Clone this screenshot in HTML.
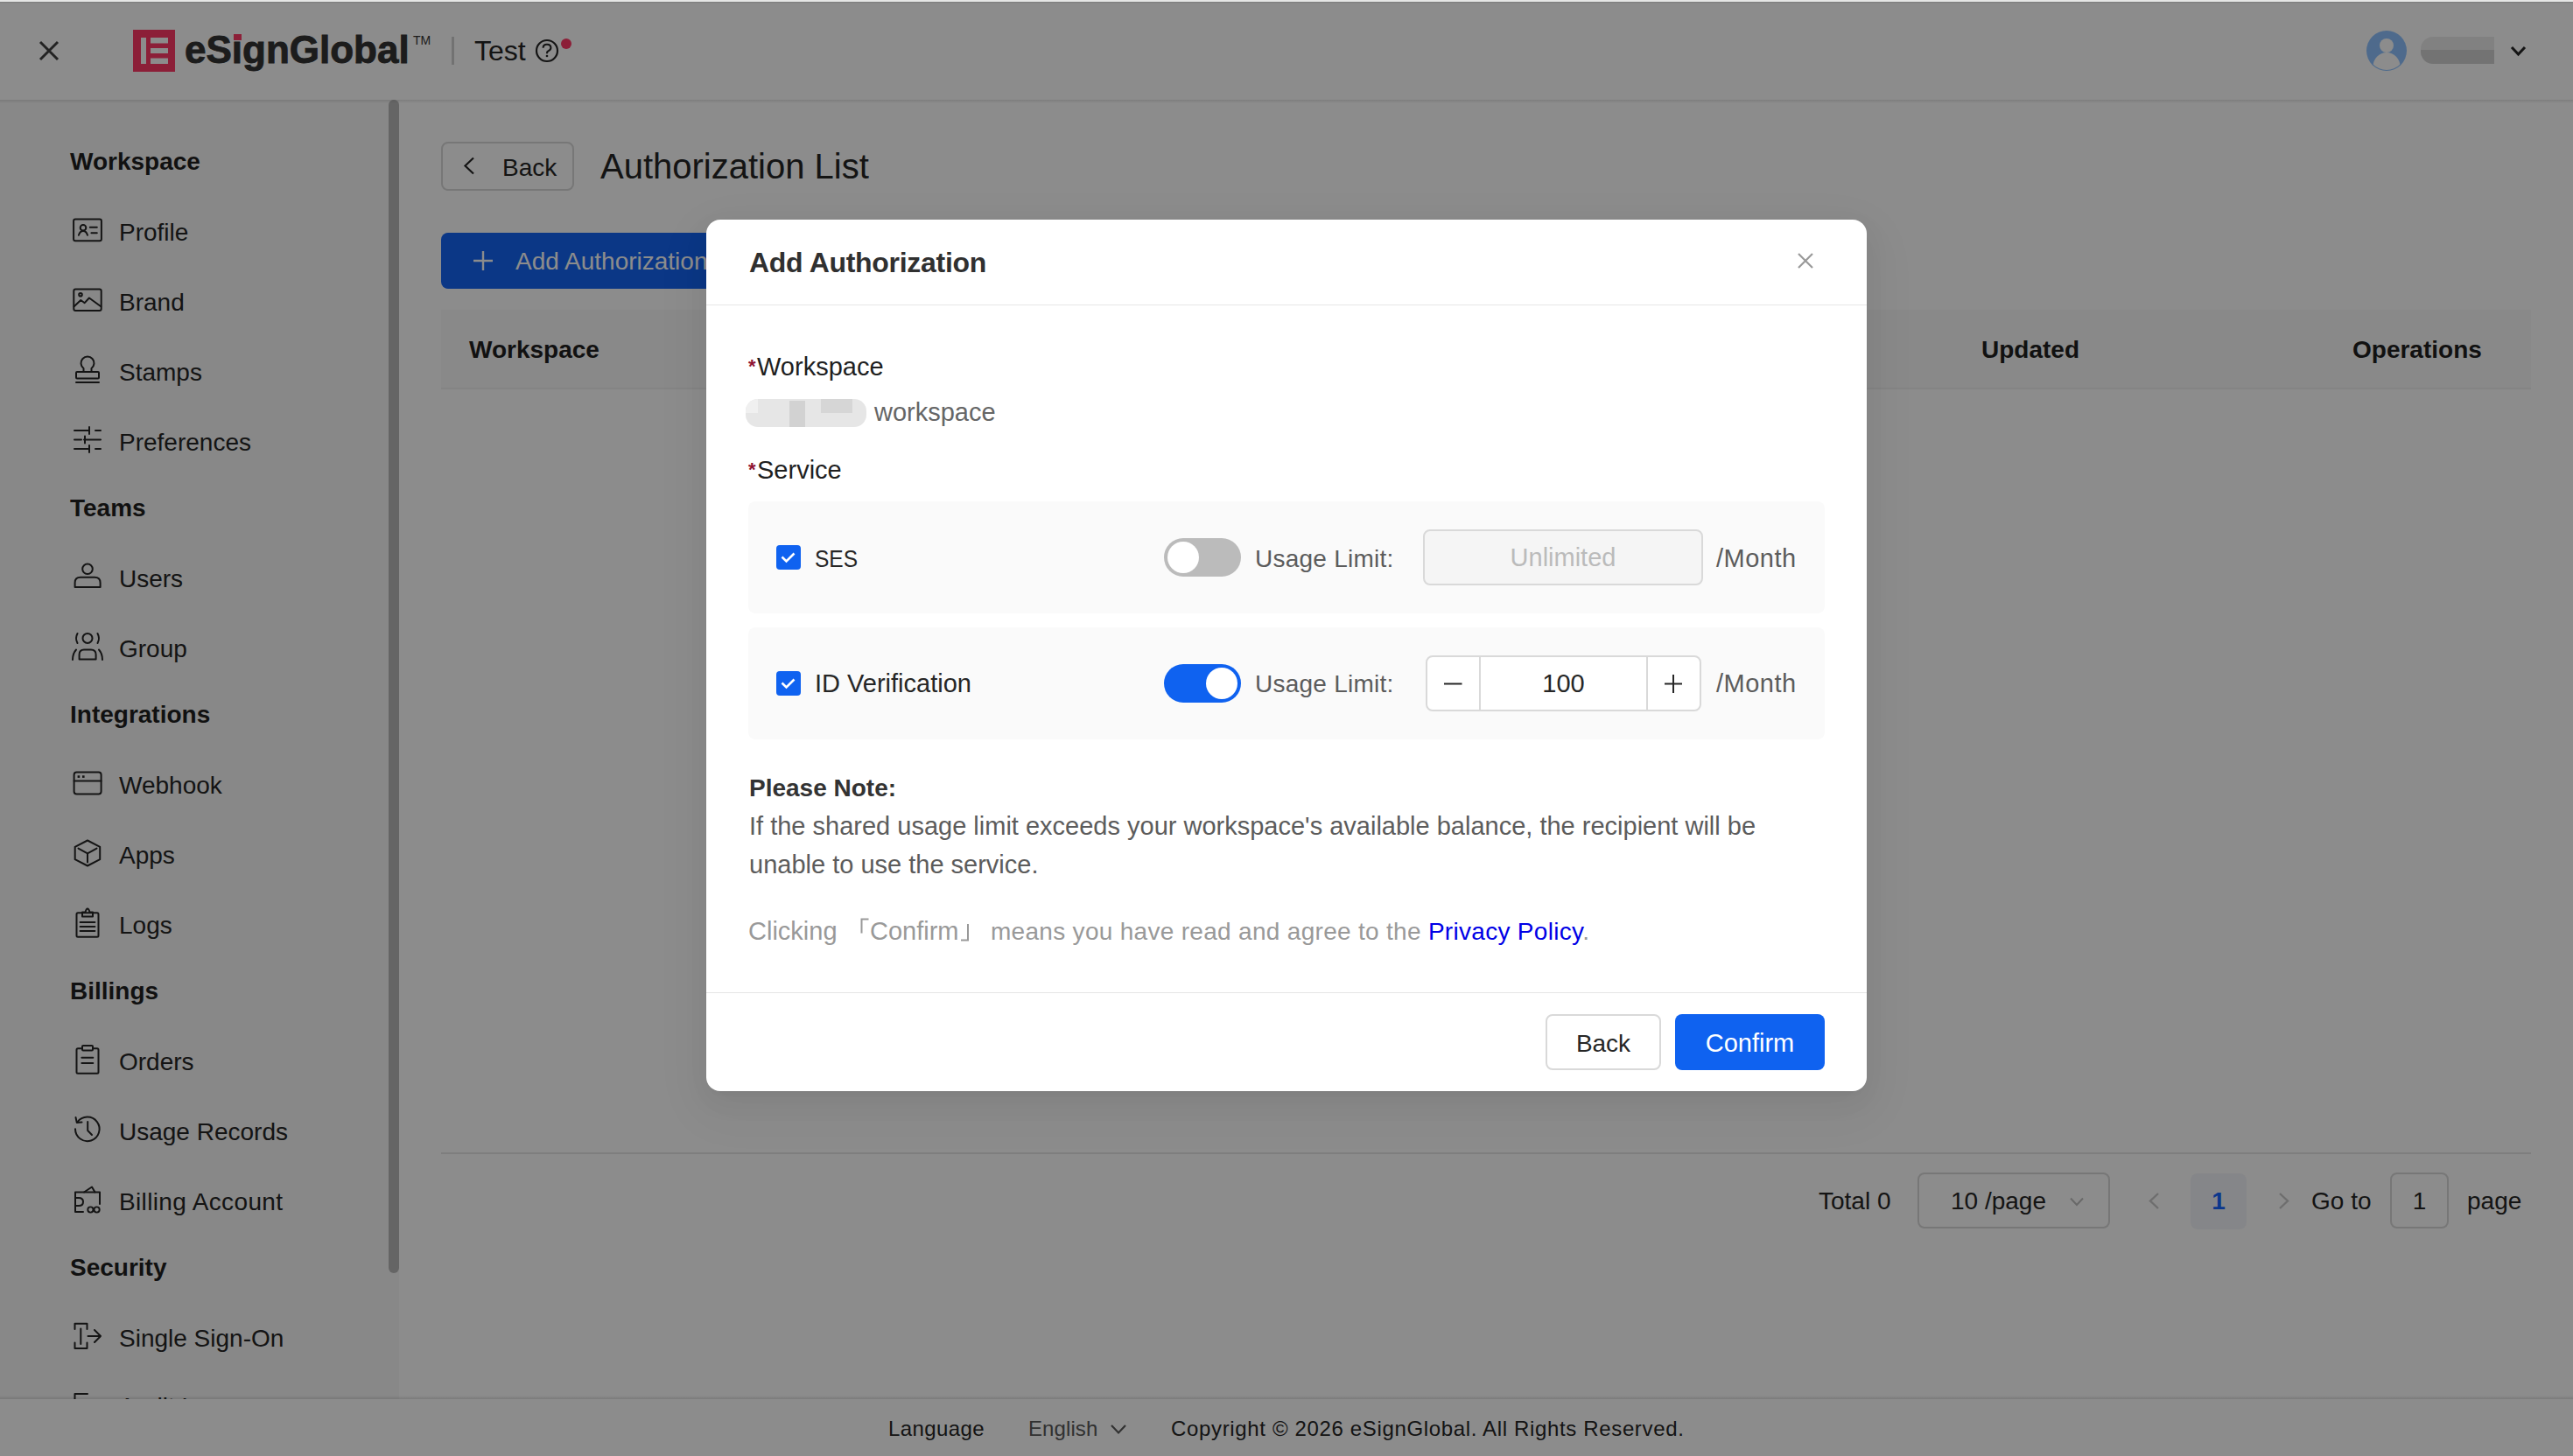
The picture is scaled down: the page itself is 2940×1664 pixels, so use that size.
<!DOCTYPE html>
<html><head><meta charset="utf-8">
<style>
*{box-sizing:border-box;margin:0;padding:0}
html,body{width:2940px;height:1664px;overflow:hidden;background:#fff;font-family:"Liberation Sans",sans-serif;color:#262626}
.a{position:absolute;line-height:1;white-space:nowrap}
svg{position:absolute;overflow:visible}
.ic{stroke:#262626;stroke-width:2;fill:none;stroke-linecap:round;stroke-linejoin:round}
.b{position:absolute}
</style></head><body>
<div class="b" style="left:0;top:0;width:2940px;height:2px;background:#e5e6e5;z-index:50"></div>
<div class="b" style="left:0;top:2px;width:2940px;height:112px;background:#fff"></div>
<div class="b" style="left:0;top:2px;width:2940px;height:2px;background:linear-gradient(rgba(0,0,0,.12),rgba(0,0,0,0))"></div>
<div class="b" style="left:0;top:114px;width:2940px;height:4px;background:linear-gradient(rgba(0,0,0,.10),rgba(0,0,0,0));z-index:3"></div>
<div class="b" style="left:0;top:114px;width:456px;height:1485px;background:#f8f8f8"></div>
<div class="b" style="left:444px;top:114px;width:12px;height:1341px;background:#b9b9b9;border-radius:6px"></div>
<svg style="left:0;top:0" width="2940" height="114">
  <path d="M46 48 L66 68 M66 48 L46 68" stroke="#404040" stroke-width="3" fill="none"/>
  <rect x="152" y="34" width="48" height="48" fill="#ff3a66"/>
  <rect x="161" y="43" width="6" height="30" fill="#fff"/>
  <rect x="172" y="43" width="20" height="6.5" fill="#fff"/>
  <rect x="172" y="55" width="20" height="6" fill="#fff"/>
  <rect x="172" y="66.5" width="20" height="6.5" fill="#fff"/>
  <rect x="516" y="42" width="3" height="32" fill="#cfcfcf"/>
  <path d="M620.6 54.8 Q620.6 50.8 625 50.8 Q629.4 50.8 629.4 54.6 Q629.4 57.2 626.6 58.2 Q625 58.9 625 60.6 V61.2" stroke="#262626" stroke-width="2.1" fill="none"/>
  <circle cx="625" cy="64" r="1.3" fill="#262626"/>
  <circle cx="625" cy="58" r="12" stroke="#262626" stroke-width="2.2" fill="none"/>
  <circle cx="647" cy="50" r="6" fill="#ff3a66"/>
  <defs><clipPath id="av"><circle cx="2727" cy="58" r="22"/></clipPath></defs>
  <circle cx="2727" cy="58" r="23" fill="#8ec2ff"/>
  <circle cx="2727" cy="52" r="8" fill="#fff"/>
  <ellipse cx="2727" cy="76" rx="15.5" ry="16" fill="#fff" clip-path="url(#av)"/>
  <path d="M2870 54 L2877.5 62 L2885 54" stroke="#262626" stroke-width="3" fill="none"/>
</svg>
<div class="a" style="left:211px;top:35px;font-size:44px;font-weight:700;color:#333;-webkit-text-stroke:0.9px #333;">eSignGlobal</div>
<div class="b" style="left:267px;top:39px;width:9px;height:7px;background:#ff3a66;z-index:2"></div>
<div class="a" style="left:472px;top:39px;font-size:14px;color:#333;">TM</div>
<div class="a" style="left:542px;top:42px;font-size:32px;color:#262626;">Test</div>
<div class="b" style="left:2766px;top:42px;width:84px;height:31px;background:linear-gradient(#ececec 0,#ececec 50%,#d2d2d2 50%,#d2d2d2 100%);border-radius:14px 0 0 14px"></div>
<div class="a" style="left:80px;top:171px;font-size:28px;font-weight:700;color:#1f1f1f;">Workspace</div>
<div class="a" style="left:80px;top:567px;font-size:28px;font-weight:700;color:#1f1f1f;">Teams</div>
<div class="a" style="left:80px;top:803px;font-size:28px;font-weight:700;color:#1f1f1f;">Integrations</div>
<div class="a" style="left:80px;top:1119px;font-size:28px;font-weight:700;color:#1f1f1f;">Billings</div>
<div class="a" style="left:80px;top:1435px;font-size:28px;font-weight:700;color:#1f1f1f;">Security</div>
<div class="a" style="left:136px;top:252px;font-size:28px;color:#262626;">Profile</div>
<div class="a" style="left:136px;top:332px;font-size:28px;color:#262626;">Brand</div>
<div class="a" style="left:136px;top:412px;font-size:28px;color:#262626;">Stamps</div>
<div class="a" style="left:136px;top:492px;font-size:28px;color:#262626;">Preferences</div>
<div class="a" style="left:136px;top:648px;font-size:28px;color:#262626;">Users</div>
<div class="a" style="left:136px;top:728px;font-size:28px;color:#262626;">Group</div>
<div class="a" style="left:136px;top:884px;font-size:28px;color:#262626;">Webhook</div>
<div class="a" style="left:136px;top:964px;font-size:28px;color:#262626;">Apps</div>
<div class="a" style="left:136px;top:1044px;font-size:28px;color:#262626;">Logs</div>
<div class="a" style="left:136px;top:1200px;font-size:28px;color:#262626;">Orders</div>
<div class="a" style="left:136px;top:1280px;font-size:28px;color:#262626;">Usage Records</div>
<div class="a" style="left:136px;top:1360px;font-size:28px;color:#262626;letter-spacing:0.35px;">Billing Account</div>
<div class="a" style="left:136px;top:1516px;font-size:28px;color:#262626;">Single Sign-On</div>
<div class="a" style="left:136px;top:1594px;font-size:28px;color:#262626;">Audit Logs</div>
<svg style="left:0;top:0" width="460" height="1664" class="ic">
  <rect x="84.1" y="250.5" width="31.8" height="24.7" rx="2"/>
  <circle cx="95" cy="260.2" r="3.3"/>
  <path d="M89.9 268.7 Q91.5 264 95 264 Q98.5 264 100 268.7"/>
  <path d="M102.8 259.7 H110.8 M104.4 266.3 H110.8"/>
  <rect x="84.3" y="330.5" width="31.4" height="24.6" rx="2"/>
  <circle cx="92" cy="336.8" r="1.8"/>
  <path d="M84.6 350.3 L92.3 343 L96.7 346.2 L101.9 340.5 L115.3 350.3"/>
  <path d="M95.5 425 V421 A7.5 7.5 0 1 1 104.5 421 V425"/>
  <rect x="87" y="425" width="26" height="7.5" rx="1"/>
  <path d="M87 437 H113"/>
  <path d="M85 492 H102 M109 492 H115 M102 488 V496"/>
  <path d="M85 502.5 H93 M96 502.5 H115 M97 498.5 V506.5"/>
  <path d="M85 513 H102 M109 513 H115 M102 509 V517"/>
  <circle cx="100" cy="650.3" r="5.8"/>
  <path d="M85.6 671 V666 Q85.6 659.8 92 659.8 H108 Q114.6 659.8 114.6 666 V671 Z"/>
  <circle cx="100" cy="729.4" r="5.5"/>
  <path d="M90.6 753.5 V748 Q90.6 742.5 96 742.5 H104 Q109.6 742.5 109.6 748 V753.5 Z"/>
  <path d="M88.5 724 Q85.5 729.5 88.5 735 M111.5 724 Q114.5 729.5 111.5 735"/>
  <path d="M87 742.5 Q83 747 83 754 M113 742.5 Q117 747 117 754"/>
  <rect x="84.6" y="882.4" width="31" height="25" rx="3"/>
  <path d="M84.6 892.4 H115.6"/>
  <rect x="88.6" y="886.3" width="2.6" height="2.6" fill="#262626" stroke="none"/><rect x="94" y="886.3" width="2.6" height="2.6" fill="#262626" stroke="none"/>
  <path d="M100 960.5 L114.2 967.8 V982.2 L100 989.5 L85.7 982.2 V967.8 Z"/>
  <path d="M89.5 969.6 L100 975.3 L110.5 969.6 M100 975.3 V985.4"/>
  <rect x="87.5" y="1043.3" width="25" height="27.5" rx="1.5"/>
  <path d="M94 1047.5 V1042.5 H97.5 Q98.5 1038.5 100 1038.5 Q101.5 1038.5 102.5 1042.5 H106 V1047.5 Z"/>
  <path d="M91.6 1054 H108.4 M91.6 1059 H108.4 M91.6 1064 H108.4"/>
  <rect x="87.5" y="1198.2" width="25" height="28.5" rx="1.5"/>
  <rect x="94" y="1195" width="12" height="5.5" rx="1" fill="#f8f8f8"/>
  <path d="M93.4 1208.7 H106.3 M93.4 1215 H106.3"/>
  <path d="M88.5 1282.4 A13.8 13.8 0 1 1 86 1290.3"/>
  <path d="M86.5 1277 L87.8 1283 L93.5 1282.5"/>
  <path d="M100.2 1282 V1292 L105 1297"/>
  <path d="M96 1362.5 L105 1356.5 L108.5 1362.5"/>
  <path d="M114 1376 V1362.5 H86 V1385 H95"/>
  <path d="M86 1369 H90 Q95 1369 95 1373.5 Q95 1378 90 1378 H86"/>
  <circle cx="103.4" cy="1382.5" r="3.1" stroke-width="1.9"/><circle cx="110.6" cy="1382.5" r="3.1" stroke-width="1.9"/>
  <path d="M85.5 1519 V1512.8 H99.5 V1519 M85.5 1534.5 V1541 H99.5 V1534.5 M92.3 1518.5 V1536"/>
  <path d="M100.5 1527 H115 M108 1520 L115 1527 L108 1534"/>
  <path d="M85.5 1605 V1593 H100"/>
</svg>
<div class="b" style="left:504px;top:162px;width:152px;height:56px;border:2px solid #d9d9d9;border-radius:8px;background:#fff"></div>
<svg style="left:0;top:0" width="700" height="400"><path d="M541 180.5 L531.5 189.5 L541 198.5" stroke="#262626" stroke-width="2.2" fill="none"/></svg>
<div class="a" style="left:574px;top:178px;font-size:28px;color:#262626;">Back</div>
<div class="a" style="left:686px;top:170px;font-size:40px;color:#262626;">Authorization List</div>
<div class="b" style="left:504px;top:266px;width:360px;height:64px;background:#1464f4;border-radius:8px"></div>
<svg style="left:0;top:0" width="700" height="400"><path d="M552 287 V309 M541 298 H563" stroke="#fff" stroke-width="2.4" fill="none"/></svg>
<div class="a" style="left:589px;top:285px;font-size:28px;color:#fff;">Add Authorization</div>
<div class="b" style="left:504px;top:354px;width:2388px;height:91px;background:#fafafa;border-bottom:2px solid #f0f0f0"></div>
<div class="a" style="left:536px;top:386px;font-size:28px;font-weight:700;color:#1f1f1f;">Workspace</div>
<div class="a" style="left:2264px;top:386px;font-size:28px;font-weight:700;color:#1f1f1f;">Updated</div>
<div class="a" style="left:2688px;top:386px;font-size:28px;font-weight:700;color:#1f1f1f;">Operations</div>
<div class="b" style="left:504px;top:1317px;width:2388px;height:2px;background:#e6e6e6"></div>
<div class="a" style="left:2078px;top:1359px;font-size:28px;color:#262626;">Total 0</div>
<div class="b" style="left:2191px;top:1340px;width:220px;height:64px;border:2px solid #d9d9d9;border-radius:8px"></div>
<div class="a" style="left:2229px;top:1359px;font-size:28px;color:#262626;">10 /page</div>
<div class="b" style="left:2503px;top:1341px;width:64px;height:64px;background:#f3f5f9;border-radius:8px"></div>
<div class="a" style="left:2503px;top:1359px;font-size:28px;font-weight:700;color:#1664ff;width:64px;text-align:center;">1</div>
<div class="a" style="left:2641px;top:1359px;font-size:28px;color:#262626;">Go to</div>
<div class="b" style="left:2731px;top:1340px;width:67px;height:64px;border:2px solid #d9d9d9;border-radius:8px"></div>
<div class="a" style="left:2731px;top:1359px;font-size:28px;color:#262626;width:67px;text-align:center;">1</div>
<div class="a" style="left:2819px;top:1359px;font-size:28px;color:#262626;">page</div>
<svg style="left:0;top:0" width="2940" height="1664">
  <path d="M2366 1369.5 L2373 1377 L2380 1369.5" stroke="#bfbfbf" stroke-width="2" fill="none"/>
  <path d="M2466 1364 L2457 1372.5 L2466 1381" stroke="#c8c8c8" stroke-width="2.4" fill="none"/>
  <path d="M2605 1364 L2614 1372.5 L2605 1381" stroke="#c8c8c8" stroke-width="2.4" fill="none"/>
</svg>
<div class="b" style="left:0;top:1599px;width:2940px;height:65px;background:#fff;z-index:4"></div>
<div class="b" style="left:0;top:1595px;width:2940px;height:4px;background:linear-gradient(rgba(0,0,0,0),rgba(0,0,0,.12));z-index:4"></div>
<div style="position:absolute;left:0;top:0;z-index:5"><div class="a" style="left:1015px;top:1621px;font-size:24px;color:#262626;letter-spacing:0.4px;">Language</div>
<div class="a" style="left:1175px;top:1621px;font-size:24px;color:#595959;letter-spacing:0.1px;">English</div>
<svg style="left:0;top:0" width="2940" height="1664"><path d="M1270 1629 L1278 1637.5 L1286 1629" stroke="#595959" stroke-width="2.2" fill="none"/></svg><div class="a" style="left:1338px;top:1621px;font-size:24px;color:#262626;letter-spacing:0.65px;">Copyright © 2026 eSignGlobal. All Rights Reserved.</div>
</div>
<div class="b" style="left:0;top:2px;width:2940px;height:1662px;background:rgba(0,0,0,.45);z-index:10"></div>
<div class="b" style="left:807px;top:251px;width:1326px;height:996px;background:#fff;border-radius:16px;z-index:20;box-shadow:0 12px 32px 0 rgba(0,0,0,.05),0 6px 12px -8px rgba(0,0,0,.07),0 18px 56px 16px rgba(0,0,0,.03)"></div>
<div style="position:absolute;left:0;top:0;z-index:30"><div class="a" style="left:856px;top:284px;font-size:32px;font-weight:700;color:#303030;letter-spacing:-0.3px;">Add Authorization</div>
<svg style="left:0;top:0" width="2940" height="1664"><path d="M2055 290 L2071 306 M2071 290 L2055 306" stroke="#999" stroke-width="2.2" fill="none"/></svg>
<div class="b" style="left:807px;top:348px;width:1326px;height:1px;background:#e6e6e6"></div>
<div class="a" style="left:855px;top:408px;font-size:22px;font-weight:700;color:#8f1233;">*</div>
<div class="a" style="left:865px;top:405px;font-size:29px;color:#1f1f1f;">Workspace</div>
<div class="b" style="left:852px;top:456px;width:138px;height:32px;background:#e6e6e6;border-radius:14px;overflow:hidden"><div class="b" style="left:50px;top:2px;width:18px;height:30px;background:#d2d2d2"></div><div class="b" style="left:86px;top:0;width:36px;height:16px;background:#d6d6d6"></div><div class="b" style="left:0;top:0;width:14px;height:16px;background:#f0f0f0"></div></div>
<div class="a" style="left:999px;top:457px;font-size:29px;color:#666;">workspace</div>
<div class="a" style="left:855px;top:526px;font-size:22px;font-weight:700;color:#8f1233;">*</div>
<div class="a" style="left:865px;top:523px;font-size:29px;color:#1f1f1f;">Service</div>
<div class="b" style="left:855px;top:573px;width:1230px;height:128px;background:#fafafa;border-radius:8px"></div>
<div class="b" style="left:887px;top:623px;width:28px;height:28px;background:#0f62f0;border-radius:4px"></div>
<svg style="left:0;top:0" width="2940" height="1664"><path d="M893.5 636.5 L898.5 641.5 L907.5 632.5" stroke="#fff" stroke-width="2.6" fill="none"/></svg>
<div class="a" style="left:931px;top:625px;font-size:28px;color:#262626;transform:scaleX(0.875);transform-origin:0 0;">SES</div>
<div class="b" style="left:1330px;top:615px;width:88px;height:44px;background:#bbbbbb;border-radius:22px"></div>
<div class="b" style="left:1334px;top:619px;width:36px;height:36px;background:#fff;border-radius:18px"></div>
<div class="a" style="left:1434px;top:625px;font-size:28px;color:#5c5c5c;letter-spacing:0.25px;">Usage Limit:</div>
<div class="a" style="left:1961px;top:624px;font-size:29px;color:#5c5c5c;letter-spacing:0.5px;">/Month</div>
<div class="b" style="left:855px;top:717px;width:1230px;height:128px;background:#fafafa;border-radius:8px"></div>
<div class="b" style="left:887px;top:767px;width:28px;height:28px;background:#0f62f0;border-radius:4px"></div>
<svg style="left:0;top:0" width="2940" height="1664"><path d="M893.5 780.5 L898.5 785.5 L907.5 776.5" stroke="#fff" stroke-width="2.6" fill="none"/></svg>
<div class="a" style="left:931px;top:767px;font-size:29px;color:#262626;">ID Verification</div>
<div class="b" style="left:1330px;top:759px;width:88px;height:44px;background:#0f62f0;border-radius:22px"></div>
<div class="b" style="left:1378px;top:763px;width:36px;height:36px;background:#fff;border-radius:18px"></div>
<div class="a" style="left:1434px;top:768px;font-size:28px;color:#5c5c5c;letter-spacing:0.25px;">Usage Limit:</div>
<div class="a" style="left:1961px;top:767px;font-size:29px;color:#5c5c5c;letter-spacing:0.5px;">/Month</div>
<div class="b" style="left:1626px;top:605px;width:320px;height:64px;background:#f5f5f5;border:2px solid #d9d9d9;border-radius:8px"></div>
<div class="a" style="left:1626px;top:623px;font-size:29px;color:#bbbbbb;width:320px;text-align:center;">Unlimited</div>
<div class="b" style="left:1629px;top:749px;width:315px;height:64px;background:#fff;border:2px solid #d9d9d9;border-radius:8px"></div>
<div class="b" style="left:1690px;top:749px;width:2px;height:64px;background:#d9d9d9"></div>
<div class="b" style="left:1881px;top:749px;width:2px;height:64px;background:#d9d9d9"></div>
<svg style="left:0;top:0" width="2940" height="1664"><path d="M1650 781.5 H1670.5 M1902 781.5 H1922 M1912 771 V792" stroke="#262626" stroke-width="2" fill="none"/></svg>
<div class="a" style="left:1692px;top:767px;font-size:29px;color:#262626;width:189px;text-align:center;">100</div>
<div class="a" style="left:856px;top:887px;font-size:28px;font-weight:700;color:#333;">Please Note:</div>
<div class="a" style="left:856px;top:930px;font-size:29px;color:#5c5c5c;">If the shared usage limit exceeds your workspace&#39;s available balance, the recipient will be</div>
<div class="a" style="left:856px;top:974px;font-size:29px;color:#5c5c5c;">unable to use the service.</div>
<div class="a" style="left:855px;top:1050px;font-size:29px;color:#999;">Clicking</div>
<svg style="left:0;top:0" width="2940" height="1664"><path d="M984.5 1066.5 V1050.5 H992.5 M1106 1056 V1074.5 H1098" stroke="#999" stroke-width="2" fill="none"/></svg>
<div class="a" style="left:994px;top:1050px;font-size:29px;color:#999;">Confirm</div>
<div class="a" style="left:1132px;top:1051px;font-size:28px;color:#999;letter-spacing:0.3px;">means you have read and agree to the <span style="color:#0000e6">Privacy Policy</span>.</div>
<div class="b" style="left:807px;top:1134px;width:1326px;height:1px;background:#e6e6e6"></div>
<div class="b" style="left:1766px;top:1159px;width:132px;height:64px;background:#fff;border:2px solid #d9d9d9;border-radius:8px"></div>
<div class="a" style="left:1766px;top:1179px;font-size:28px;color:#262626;width:132px;text-align:center;">Back</div>
<div class="b" style="left:1914px;top:1159px;width:171px;height:64px;background:#0f62f0;border-radius:8px"></div>
<div class="a" style="left:1914px;top:1178px;font-size:29px;color:#fff;width:171px;text-align:center;">Confirm</div>
</div>
</body></html>
